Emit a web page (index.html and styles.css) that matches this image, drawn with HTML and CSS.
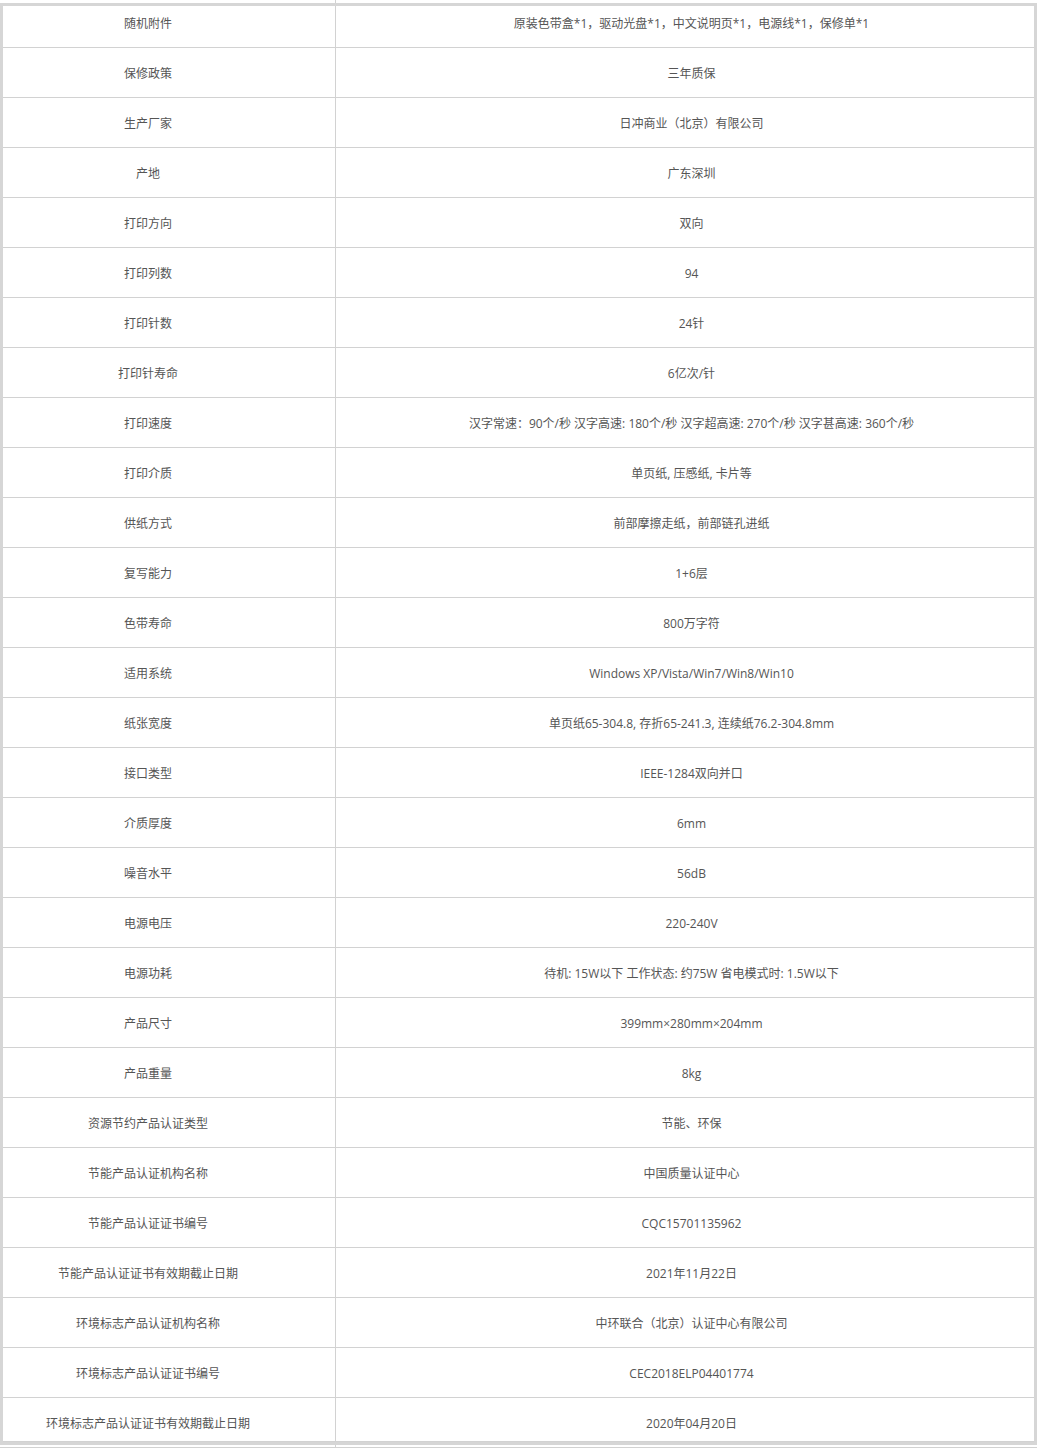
FILE: index.html
```html
<!DOCTYPE html>
<html lang="zh-CN">
<head>
<meta charset="utf-8">
<title>参数</title>
<link rel="stylesheet" href="styles.css">
</head>
<body>
<div class="stub stub-top"><span></span><span class="vline"></span></div>
<div class="frame">
  <div class="row first"><div class="k">随机附件</div><div class="v">原装色带盒*1，驱动光盘*1，中文说明页*1，电源线*1，保修单*1</div></div>
  <div class="row"><div class="k">保修政策</div><div class="v">三年质保</div></div>
  <div class="row"><div class="k">生产厂家</div><div class="v">日冲商业（北京）有限公司</div></div>
  <div class="row"><div class="k">产地</div><div class="v">广东深圳</div></div>
  <div class="row"><div class="k">打印方向</div><div class="v">双向</div></div>
  <div class="row"><div class="k">打印列数</div><div class="v">94</div></div>
  <div class="row"><div class="k">打印针数</div><div class="v">24针</div></div>
  <div class="row"><div class="k">打印针寿命</div><div class="v">6亿次/针</div></div>
  <div class="row"><div class="k">打印速度</div><div class="v">汉字常速：90个/秒 汉字高速: 180个/秒 汉字超高速: 270个/秒 汉字甚高速: 360个/秒</div></div>
  <div class="row"><div class="k">打印介质</div><div class="v">单页纸, 压感纸, 卡片等</div></div>
  <div class="row"><div class="k">供纸方式</div><div class="v">前部摩擦走纸，前部链孔进纸</div></div>
  <div class="row"><div class="k">复写能力</div><div class="v">1+6层</div></div>
  <div class="row"><div class="k">色带寿命</div><div class="v">800万字符</div></div>
  <div class="row"><div class="k">适用系统</div><div class="v">Windows XP/Vista/Win7/Win8/Win10</div></div>
  <div class="row"><div class="k">纸张宽度</div><div class="v">单页纸65-304.8, 存折65-241.3, 连续纸76.2-304.8mm</div></div>
  <div class="row"><div class="k">接口类型</div><div class="v">IEEE-1284双向并口</div></div>
  <div class="row"><div class="k">介质厚度</div><div class="v">6mm</div></div>
  <div class="row"><div class="k">噪音水平</div><div class="v">56dB</div></div>
  <div class="row"><div class="k">电源电压</div><div class="v">220-240V</div></div>
  <div class="row"><div class="k">电源功耗</div><div class="v">待机: 15W以下 工作状态: 约75W 省电模式时: 1.5W以下</div></div>
  <div class="row"><div class="k">产品尺寸</div><div class="v">399mm×280mm×204mm</div></div>
  <div class="row"><div class="k">产品重量</div><div class="v">8kg</div></div>
  <div class="row"><div class="k">资源节约产品认证类型</div><div class="v">节能、环保</div></div>
  <div class="row"><div class="k">节能产品认证机构名称</div><div class="v">中国质量认证中心</div></div>
  <div class="row"><div class="k">节能产品认证证书编号</div><div class="v">CQC15701135962</div></div>
  <div class="row"><div class="k">节能产品认证证书有效期截止日期</div><div class="v">2021年11月22日</div></div>
  <div class="row"><div class="k">环境标志产品认证机构名称</div><div class="v">中环联合（北京）认证中心有限公司</div></div>
  <div class="row"><div class="k">环境标志产品认证证书编号</div><div class="v">CEC2018ELP04401774</div></div>
  <div class="row last"><div class="k">环境标志产品认证证书有效期截止日期</div><div class="v">2020年04月20日</div></div>
</div>
<div class="stub stub-bottom"><span></span><span class="vline"></span></div>
</body>
</html>
```
FILE: styles.css
```css
html, body {
  margin: 0;
  padding: 0;
  background: #ffffff;
}
body {
  width: 1037px;
  font-family: "Open Sans", "Noto Sans CJK SC", sans-serif;
  font-size: 12px;
  color: #555555;
}
.stub {
  display: grid;
  grid-template-columns: 335px 1px;
}
.stub-top {
  height: 3px;
}
.stub-bottom {
  height: 2px;
  border-bottom: 1px solid #d2d2d2;
}
.vline {
  background: #d2d2d2;
}
.frame {
  border: 3px solid #d6d6d6;
}
.row {
  display: grid;
  grid-template-columns: 333px 1fr;
  border-bottom: 1px solid #d2d2d2;
}
.k, .v {
  line-height: 16px;
  padding-top: 18px;
  padding-bottom: 15px;
  text-align: center;
  white-space: nowrap;
}
.k {
  border-right: 1px solid #d2d2d2;
  padding-right: 42px;
}
.v {
  padding-left: 13px;
}
.first .k, .first .v {
  padding-top: 10px;
  padding-bottom: 15px;
}
.last .k, .last .v {
  padding-top: 18px;
  padding-bottom: 9px;
}
```
